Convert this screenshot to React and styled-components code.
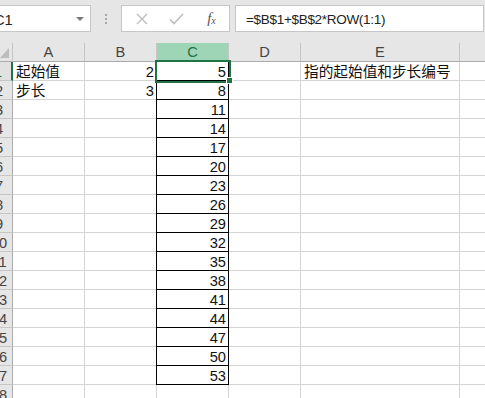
import React from 'react';
import styled, { createGlobalStyle } from 'styled-components';

const GlobalStyle = createGlobalStyle`
  html, body { margin: 0; padding: 0; background: #fff; overflow: hidden; }
  body { font-family: "Liberation Sans", "Noto Sans CJK SC", sans-serif; }
`;

const Window = styled.div`
  width: 485px;
  height: 398px;
  overflow: hidden;
  display: flex;
  flex-direction: column;
  background: #fff;
`;

const FormulaBar = styled.div`
  display: flex;
  align-items: flex-start;
  height: 43px;
  padding-top: 5px;
  box-sizing: border-box;
  background: #e6e6e6;
  flex-shrink: 0;
`;

const NameBox = styled.div`
  margin-left: -12px;
  width: 103px;
  height: 27px;
  flex-shrink: 0;
  box-sizing: border-box;
  border: 1px solid #c6c6c6;
  background: #fff;
  display: flex;
  align-items: center;
  justify-content: space-between;
  padding: 2px 6px 0 5px;
  font-size: 14.67px;
  color: #222;
`;

const DropArrow = styled.span`
  width: 0;
  height: 0;
  margin-top: -2px;
  border-left: 4px solid transparent;
  border-right: 4px solid transparent;
  border-top: 4px solid #7a7a7a;
`;

const Grip = styled.div`
  width: 30px;
  height: 27px;
  flex-shrink: 0;
  display: flex;
  flex-direction: column;
  align-items: center;
  justify-content: center;
  gap: 2px;
`;

const GripDot = styled.span`
  width: 2px;
  height: 2px;
  background: #a8a8a8;
`;

const ButtonGroup = styled.div`
  width: 109px;
  height: 27px;
  flex-shrink: 0;
  box-sizing: border-box;
  border: 1px solid #c6c6c6;
  background: #fff;
  display: flex;
  padding-left: 2px;
`;

const BarButton = styled.div`
  width: 35px;
  height: 25px;
  display: flex;
  align-items: center;
  justify-content: center;
  color: ${(p) => (p.$enabled ? '#555' : '#bdbdbd')};
`;

const Fx = styled.span`
  font-family: "Liberation Serif", serif;
  font-style: italic;
  font-size: 15px;
  line-height: 1;
  color: #555;
  margin-top: -1px;
  sub {
    font-size: 10px;
    vertical-align: -1px;
  }
`;

const FormulaBox = styled.div`
  flex: 1;
  margin-left: 5px;
  margin-right: 1px;
  height: 27px;
  box-sizing: border-box;
  border: 1px solid #c6c6c6;
  background: #fff;
  display: flex;
  align-items: center;
  padding: 2px 0 0 10px;
  font-size: 13.5px;
  letter-spacing: -0.3px;
  color: #222;
  white-space: nowrap;
`;

const Sheet = styled.div`
  display: grid;
  grid-template-columns: 13px 72px 72px 72px 72px 159px 72px;
  grid-auto-rows: 19px;
  font-size: 14.67px;
`;

const Corner = styled.div`
  box-sizing: border-box;
  background: #e6e6e6;
  border-right: 1px solid #c6c6c6;
  border-bottom: 1px solid #ababab;
  display: flex;
  justify-content: flex-end;
  align-items: flex-end;
  padding: 0 3px 3px 0;
`;

const ColumnHeader = styled.div`
  box-sizing: border-box;
  background: ${(p) => (p.$selected ? '#9fd5b7' : '#e6e6e6')};
  color: ${(p) => (p.$selected ? '#217346' : '#444')};
  border-right: 1px solid #c6c6c6;
  border-bottom: 1px solid ${(p) => (p.$selected ? '#217346' : '#ababab')};
  text-align: center;
  line-height: 18px;
`;

const RowHeader = styled.div`
  box-sizing: border-box;
  background: ${(p) => (p.$selected ? '#e1e1e1' : '#e6e6e6')};
  color: ${(p) => (p.$selected ? '#217346' : '#444')};
  border-right: ${(p) => (p.$selected ? '2px solid #217346' : '1px solid #ababab')};
  border-bottom: 1px solid #c6c6c6;
  display: flex;
  justify-content: flex-end;
  overflow: hidden;
`;

const RowNumber = styled.span`
  flex-shrink: 0;
  width: 26px;
  text-align: center;
  line-height: 20px;
`;

const Cell = styled.div`
  position: relative;
  box-sizing: border-box;
  border-right: 1px solid ${(p) => (p.$boxed ? '#000' : '#d4d4d4')};
  border-bottom: 1px solid ${(p) => (p.$boxed ? '#000' : '#d4d4d4')};
  box-shadow: ${(p) => (p.$boxed ? '-1px 0 0 #000' : 'none')};
  padding: 0 2px 0 3px;
  line-height: 20px;
  white-space: nowrap;
  text-align: ${(p) => (p.$align === 'right' ? 'right' : 'left')};
  color: #111;
  ${(p) =>
    p.$active &&
    `
    z-index: 2;
    outline: 2px solid #217346;
    &::after {
      content: '';
      position: absolute;
      right: -5px;
      bottom: -4px;
      width: 5px;
      height: 5px;
      background: #217346;
      border: 1px solid #fff;
    }
  `}
`;

const columns = ['A', 'B', 'C', 'D', 'E', 'F'];

const leftData = {
  1: { A: '起始值', B: '2', E: '指的起始值和步长编号' },
  2: { A: '步长', B: '3' },
};

const CancelIcon = () => (
  <svg width="12" height="12" viewBox="0 0 12 12">
    <path d="M1 1 L11 11 M11 1 L1 11" stroke="currentColor" strokeWidth="1.4" fill="none" />
  </svg>
);

const CheckIcon = () => (
  <svg width="15" height="12" viewBox="0 0 15 12">
    <path d="M1 6.5 L5 10.5 L14 1" stroke="currentColor" strokeWidth="1.6" fill="none" />
  </svg>
);

const SelectAll = () => (
  <svg width="9" height="10" viewBox="0 0 9 10">
    <polygon points="9,0 9,10 0,10" fill="#bcbcbc" />
  </svg>
);

export default function App() {
  const rows = Array.from({ length: 18 }, (_, i) => i + 1);
  return (
    <Window>
      <GlobalStyle />
      <FormulaBar>
        <NameBox>
          <span>C1</span>
          <DropArrow />
        </NameBox>
        <Grip>
          <GripDot />
          <GripDot />
          <GripDot />
        </Grip>
        <ButtonGroup>
          <BarButton>
            <CancelIcon />
          </BarButton>
          <BarButton>
            <CheckIcon />
          </BarButton>
          <BarButton $enabled>
            <Fx>
              f<sub>x</sub>
            </Fx>
          </BarButton>
        </ButtonGroup>
        <FormulaBox>=$B$1+$B$2*ROW(1:1)</FormulaBox>
      </FormulaBar>
      <Sheet>
        <Corner>
          <SelectAll />
        </Corner>
        {columns.map((c) => (
          <ColumnHeader key={c} $selected={c === 'C'}>
            {c}
          </ColumnHeader>
        ))}
        {rows.map((r) => (
          <React.Fragment key={r}>
            <RowHeader $selected={r === 1}>
              <RowNumber>{r}</RowNumber>
            </RowHeader>
            {columns.map((c) => {
              const inC = c === 'C' && r <= 17;
              let value = leftData[r] ? leftData[r][c] : undefined;
              if (inC) value = String(2 + 3 * r);
              const right = c === 'B' || c === 'C';
              return (
                <Cell
                  key={c}
                  $align={right ? 'right' : 'left'}
                  $boxed={inC}
                  $active={c === 'C' && r === 1}
                >
                  {value}
                </Cell>
              );
            })}
          </React.Fragment>
        ))}
      </Sheet>
    </Window>
  );
}
